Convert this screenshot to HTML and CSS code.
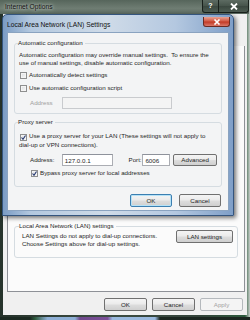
FILE: index.html
```html
<!DOCTYPE html>
<html>
<head>
  <meta charset="utf-8">
  <title>Internet Options</title>
  <link rel="stylesheet" href="styles.css">
</head>
<body>
  <div class="screen">
    <div class="win">
      <div class="win-title">
        <span class="win-name">Internet Options</span>
        <div class="caps">
          <span class="cap help">?</span>
          <span class="cap shut">
            <svg width="8" height="7" viewBox="0 0 8 7"><path d="M1 0.5L7 6.5M7 0.5L1 6.5" stroke="#fff" stroke-width="1.8"/></svg>
          </span>
        </div>
      </div>
      <div class="win-body">
        <div class="tab-panel">
          <fieldset class="group lan">
            <legend>Local Area Network (LAN) settings</legend>
            <div class="lan-row">
              <p class="note">LAN Settings do not apply to dial-up connections.<br>Choose Settings above for dial-up settings.</p>
              <button class="btn lan-btn">LAN settings</button>
            </div>
          </fieldset>
        </div>
        <div class="btn-row">
          <button class="btn">OK</button>
          <button class="btn">Cancel</button>
          <button class="btn" disabled>Apply</button>
        </div>
      </div>
    </div>
    <div class="taskbar"></div>

    <!-- LAN settings dialog, floating over the Internet Options window -->
    <div class="dlg">
      <div class="dlg-title">
        <span class="dlg-name">Local Area Network (LAN) Settings</span>
        <span class="dlg-close">
          <svg width="8" height="6" viewBox="0 0 8 6"><path d="M1.5 0.5L6.5 5.5M6.5 0.5L1.5 5.5" stroke="#fff" stroke-width="1.6"/></svg>
        </span>
      </div>
      <div class="dlg-body">
        <fieldset class="group auto">
          <legend>Automatic configuration</legend>
          <p class="note">Automatic configuration may override manual settings.&nbsp; To ensure the<br>use of manual settings, disable automatic configuration.</p>
          <div class="check first"><span class="cb"></span>Automatically detect settings</div>
          <div class="check"><span class="cb"></span>Use automatic configuration script</div>
          <div class="addr-row off">
            <span class="lbl">Address</span>
            <span class="field wide"></span>
          </div>
        </fieldset>
        <fieldset class="group proxy">
          <legend>Proxy server</legend>
          <p class="note multi"><span class="cb on"><svg width="5" height="5" viewBox="0 0 5 5"><path d="M0.5 2.5L2 4.3L4.5 0.5" fill="none" stroke="#23366e" stroke-width="1.1"/></svg></span>Use a proxy server for your LAN (These settings will not apply to<br>dial-up or VPN connections).</p>
          <div class="addr-row">
            <span class="lbl">Address:</span>
            <span class="field ip">127.0.0.1</span>
            <span class="lbl port-lbl">Port:</span>
            <span class="field port">6006</span>
            <button class="btn adv">Advanced</button>
          </div>
          <div class="check bypass"><span class="cb on"><svg width="5" height="5" viewBox="0 0 5 5"><path d="M0.5 2.5L2 4.3L4.5 0.5" fill="none" stroke="#23366e" stroke-width="1.1"/></svg></span>Bypass proxy server for local addresses</div>
        </fieldset>
        <div class="btn-row dlg-btns">
          <button class="btn default">OK</button>
          <button class="btn">Cancel</button>
        </div>
      </div>
    </div>
  </div>
</body>
</html>
```

FILE: styles.css
```css
* {
  margin: 0;
  padding: 0;
  box-sizing: border-box;
}
body {
  width: 250px;
  height: 320px;
  overflow: hidden;
  background: #1b2620;
  font-family: "Liberation Sans", Arial, sans-serif;
  font-size: 6.2px;
  line-height: 8px;
  color: #1e1e1e;
}
.screen {
  position: relative;
  width: 250px;
  height: 320px;
  display: flex;
  flex-direction: column;
}

/* outer window */
.win {
  height: 317px;
  display: flex;
  flex-direction: column;
  padding: 0 3px 2px 3px;
  background: linear-gradient(to right, #26332b, #3d4d43 40%, #33433a 80%, #2c5a3c 98%, #c9cfcb);
}
.win-title {
  height: 14px;
  display: flex;
  align-items: flex-start;
  margin-right: -2px;
  background: linear-gradient(#56655b, #6f7d73 60%, #5a695f);
  margin-left: -3px;
  padding-left: 3px;
}
.win-name {
  padding: 3px 0 0 2px;
  font-size: 6.7px;
  color: #111;
  text-shadow: 0 0 3px rgba(225, 232, 226, 0.9), 0 0 6px rgba(205, 214, 208, 0.8);
}
.caps {
  margin-left: auto;
  display: flex;
}
.cap {
  height: 13px;
  display: flex;
  align-items: center;
  justify-content: center;
  border: 1px solid #18201b;
  border-top: 0;
  background: linear-gradient(#5d6b62, #46544b 50%, #3a473f 51%, #4d5c52);
  color: #fff;
  font-weight: bold;
  font-size: 7px;
}
.help {
  width: 17px;
  border-radius: 0 0 0 3px;
}
.shut {
  width: 30px;
  border-left: 0;
  border-radius: 0 0 3px 0;
}
.win-body {
  flex: 1;
  display: flex;
  flex-direction: column;
  background: #f0f0f0;
}
.tab-panel {
  height: 246px;
  margin: 32px 2px 0 4px;
  border: 1px solid #8e9197;
  border-top: 0;
  background: #fbfbfb;
  padding: 176px 6px 0 6px;
}
.btn-row {
  display: flex;
  justify-content: flex-end;
  gap: 5px;
  padding: 6px 4px 0 0;
}
.btn {
  width: 43px;
  height: 13px;
  border: 1px solid #707070;
  border-radius: 2px;
  background: linear-gradient(#f4f4f4, #ebebeb 48%, #dddddd 52%, #cfcfcf);
  font-family: inherit;
  font-size: 6.2px;
  color: #1e1e1e;
  line-height: 11px;
}
.btn:disabled {
  border-color: #b5b9bd;
  background: #f4f4f4;
  color: #a3a3a3;
}
.btn.default {
  border-color: #3c7fb1;
  box-shadow: inset 0 0 0 1px #b5e2f7;
}

/* group boxes */
.group {
  border: 1px solid #d5dce1;
  border-radius: 3px;
  padding: 1px 4px 4px 4px;
  min-width: 0;
}
.group legend {
  margin-left: -1px;
  padding: 0 2px 0 0;
  line-height: 8px;
}
.lan {
  height: 36px;
  padding-left: 7px;
}
.lan legend {
  margin-left: -3px;
}
.lan-row {
  display: flex;
  align-items: flex-start;
}
.lan-row .note {
  padding-top: 1px;
}
.lan-btn {
  width: 57px;
  margin: -1px 0 0 auto;
}
.taskbar {
  flex: 1;
  background: linear-gradient(to right, #1c2a22 12%, #2d5a3c 14%, #8fb0d6 19%, #8fb0d6 30%, #6f4a8c 32%, #7b4f97 43%, #9ab9de 45%, #9ab9de 62%, #1b2620 64%);
}

/* LAN dialog */
.dlg {
  position: absolute;
  left: 2px;
  top: 14px;
  width: 232px;
  height: 202px;
  display: flex;
  flex-direction: column;
  padding: 0 4px 4px 4px;
  border: 1px solid #34557e;
  border-radius: 5px 5px 0 0;
  background: linear-gradient(to right, #7b9cc4, #b3c8df 12%, #cfdbe8 45%, #b4c8e0 75%, #7f9fc8);
  box-shadow: 2px 2px 4px rgba(0, 0, 0, 0.55);
}
.dlg-title {
  height: 17px;
  display: flex;
  align-items: flex-start;
}
.dlg-name {
  padding: 6px 0 0 0;
  font-size: 6.7px;
  color: #111;
}
.dlg-close {
  width: 27px;
  height: 10px;
  margin: 2px -1px 0 auto;
  display: flex;
  align-items: center;
  justify-content: center;
  border: 1px solid #6b2a22;
  border-top: 0;
  border-radius: 0 0 3px 3px;
  background: linear-gradient(#e9a293, #d15b47 45%, #c23a26 55%, #d9786a);
}
.dlg-body {
  flex: 1;
  background: #f3f4f5;
  border: 1px solid #8aa3c0;
  padding: 6px 6px 0 6px;
}
.note {
  white-space: nowrap;
}
.auto .note {
  padding-top: 3px;
}
.check {
  display: flex;
  align-items: center;
  height: 8px;
  margin-top: 5px;
}
.check.first {
  margin-top: 4px;
}
.cb {
  display: inline-flex;
  align-items: center;
  justify-content: center;
  width: 7px;
  height: 7px;
  margin: 0 2px 0 1px;
  border: 1px solid #8e8f8f;
  background: linear-gradient(135deg, #d9dbdd, #fafbfb);
  box-shadow: inset 0 0 0 1px #f4f4f4;
  vertical-align: -2px;
}
.addr-row {
  display: flex;
  align-items: center;
  margin-top: 5px;
  padding-left: 11px;
}
.addr-row .lbl {
  width: 32px;
}
.off .lbl {
  color: #a0a0a0;
}
.field {
  height: 12px;
  border: 1px solid #abadb3;
  border-top-color: #8e929b;
  background: #fff;
  padding: 2px 0 0 2px;
}
.off .field {
  border-color: #c9cbce;
  background: #f4f4f4;
}
.wide {
  width: 110px;
}
.ip {
  width: 51px;
}
.port-lbl.lbl {
  width: 14px;
  margin-left: 16px;
}
.port {
  width: 28px;
}
.adv {
  width: 44px;
  height: 12px;
  margin-left: 3px;
  line-height: 10px;
}
.proxy {
  margin-top: 4px;
  padding-bottom: 9px;
}
.multi {
  padding-top: 5px;
}
.bypass {
  margin-top: 3px;
  padding-left: 11px;
}
.dlg-btns {
  gap: 7px;
  padding: 7px 1px 0 0;
}
.dlg-btns .btn {
  width: 42px;
}
```
